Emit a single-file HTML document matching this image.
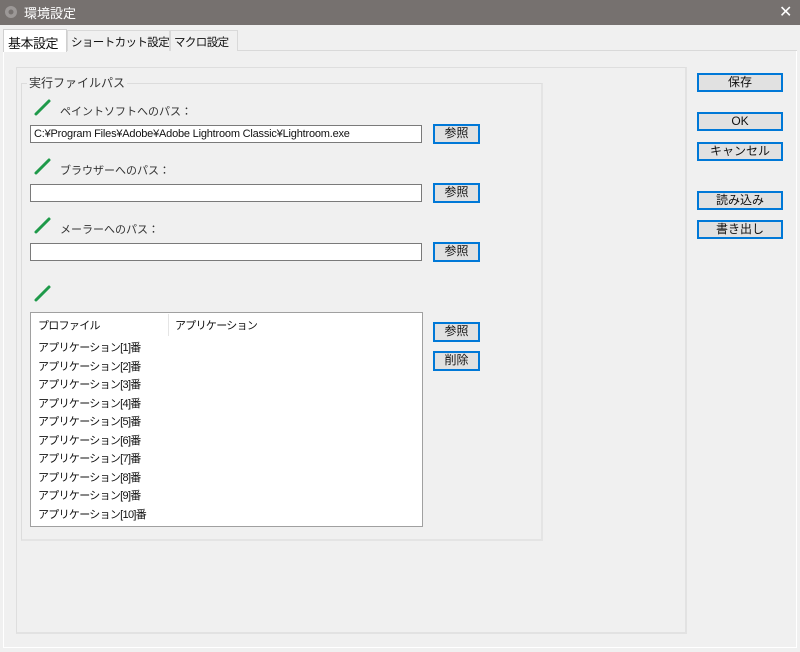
<!DOCTYPE html>
<html><head><meta charset="utf-8"><style>
*{margin:0;padding:0;box-sizing:border-box}
body{width:800px;height:652px;background:#f0f0f0;position:relative;overflow:hidden;font-family:"Liberation Sans","Noto Sans CJK JP",sans-serif;font-size:12px;color:#111}
.a{position:absolute;white-space:nowrap}
.title{left:0;top:0;width:800px;height:25px;background:#76716f;color:#fff;font-size:13px}
.tab{top:30px;height:21px;font-size:11.5px;letter-spacing:-0.6px;padding:3px 3px;border:1px solid #d9d9d9;border-bottom:none;background:#f0f0f0;overflow:hidden}
.inp{background:#fff;border:1px solid #7a7a7a;height:18px;font-size:11px;padding:1px 3px;line-height:15px;overflow:hidden;letter-spacing:-0.2px}
.btn{background:#e1e1e1;border:2px solid #0078d7;text-align:center;font-size:12px;line-height:15px}
.lbl{font-size:11px;color:#333}
.pen{width:20px;height:20px}
.li{left:38px;font-size:11px;letter-spacing:-0.7px}
</style></head><body>
<div class="a title">
<svg class="a" style="left:4px;top:5px" width="14" height="14"><circle cx="7" cy="7" r="6" fill="#9c9897"/><circle cx="7" cy="7" r="2.5" fill="#76716f"/></svg>
<span class="a" style="left:24px;top:3px">環境設定</span>
<span class="a" style="left:779px;top:2px;font-size:16px">✕</span>
</div>
<div class="a" style="left:3px;top:50px;width:794px;height:598px;border:1px solid #d9d9d9;background:#f0f0f0"></div>
<div class="a tab" style="left:3px;top:29px;height:23px;width:64px;background:#fff;border-color:#d0d0d0;z-index:2;font-size:13px;letter-spacing:-0.5px;padding:3px 4px">基本設定</div>
<div class="a tab" style="left:67px;width:103px">ショートカット設定</div>
<div class="a tab" style="left:170px;width:68px">マクロ設定</div>
<div class="a" style="left:3px;top:51px;width:794px;height:597px;background:#f0f0f0;border:1px solid #fff;border-top:none"></div>
<div class="a" style="left:16px;top:67px;width:671px;height:567px;border:1px solid #dedede;border-right:2px solid #e2e2e2;border-bottom:2px solid #e2e2e2"></div>
<div class="a" style="left:21px;top:83px;width:522px;height:458px;border:1px solid #dcdcdc;border-right:2px solid #e4e4e4;border-bottom:2px solid #e4e4e4"></div>
<span class="a lbl" style="left:27px;top:74px;background:#f0f0f0;padding:0 2px;font-size:12px">実行ファイルパス</span>

<svg class="a pen" style="left:33px;top:97px" viewBox="0 0 20 20"><path d="M3 17 L16 4" stroke="#1f9a4a" stroke-width="3" stroke-linecap="round"/></svg>
<span class="a lbl" style="left:60px;top:103px">ペイントソフトへのパス：</span>
<div class="a inp" style="left:30px;top:125px;width:392px">C:¥Program Files¥Adobe¥Adobe Lightroom Classic¥Lightroom.exe</div>
<div class="a btn" style="left:433px;top:124px;width:47px;height:20px">参照</div>

<svg class="a pen" style="left:33px;top:156px" viewBox="0 0 20 20"><path d="M3 17 L16 4" stroke="#1f9a4a" stroke-width="3" stroke-linecap="round"/></svg>
<span class="a lbl" style="left:60px;top:162px">ブラウザーへのパス：</span>
<div class="a inp" style="left:30px;top:184px;width:392px"></div>
<div class="a btn" style="left:433px;top:183px;width:47px;height:20px">参照</div>

<svg class="a pen" style="left:33px;top:215px" viewBox="0 0 20 20"><path d="M3 17 L16 4" stroke="#1f9a4a" stroke-width="3" stroke-linecap="round"/></svg>
<span class="a lbl" style="left:60px;top:221px">メーラーへのパス：</span>
<div class="a inp" style="left:30px;top:243px;width:392px"></div>
<div class="a btn" style="left:433px;top:242px;width:47px;height:20px">参照</div>

<svg class="a pen" style="left:33px;top:283px" viewBox="0 0 20 20"><path d="M3 17 L16 4" stroke="#1f9a4a" stroke-width="3" stroke-linecap="round"/></svg>

<div class="a" style="left:30px;top:312px;width:393px;height:215px;background:#fff;border:1px solid #a0a0a0"></div>
<span class="a li" style="top:317px">プロファイル</span>
<div class="a" style="left:168px;top:314px;width:1px;height:22px;background:#e5e5e5"></div>
<span class="a li" style="left:175px;top:317px">アプリケーション</span>
<span class="a li" style="top:339px">アプリケーション[1]番</span>
<span class="a li" style="top:357.5px">アプリケーション[2]番</span>
<span class="a li" style="top:376px">アプリケーション[3]番</span>
<span class="a li" style="top:394.5px">アプリケーション[4]番</span>
<span class="a li" style="top:413px">アプリケーション[5]番</span>
<span class="a li" style="top:431.5px">アプリケーション[6]番</span>
<span class="a li" style="top:450px">アプリケーション[7]番</span>
<span class="a li" style="top:468.5px">アプリケーション[8]番</span>
<span class="a li" style="top:487px">アプリケーション[9]番</span>
<span class="a li" style="top:505.5px">アプリケーション[10]番</span>
<div class="a btn" style="left:433px;top:322px;width:47px;height:20px">参照</div>
<div class="a btn" style="left:433px;top:351px;width:47px;height:20px">削除</div>

<div class="a btn" style="left:697px;top:73px;width:86px;height:19px">保存</div>
<div class="a btn" style="left:697px;top:112px;width:86px;height:19px">OK</div>
<div class="a btn" style="left:697px;top:142px;width:86px;height:19px">キャンセル</div>
<div class="a btn" style="left:697px;top:191px;width:86px;height:19px">読み込み</div>
<div class="a btn" style="left:697px;top:220px;width:86px;height:19px">書き出し</div>
</body></html>
